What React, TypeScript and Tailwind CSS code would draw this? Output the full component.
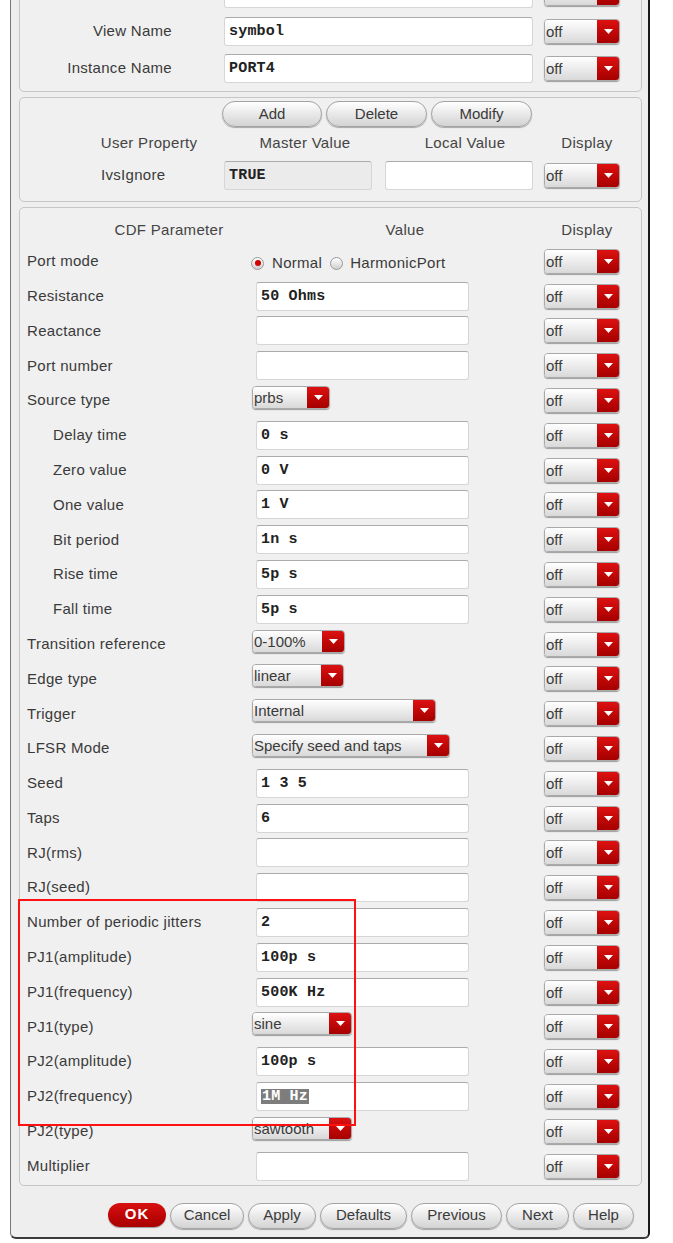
import React from "react";

type Row =
  | { label: string; indent?: boolean; kind: "field"; value: string; selected?: boolean }
  | { label: string; indent?: boolean; kind: "combo"; value: string; w: number }
  | { label: string; indent?: boolean; kind: "radio" };

const rows: Row[] = [
  { label: "Port mode", kind: "radio" },
  { label: "Resistance", kind: "field", value: "50 Ohms" },
  { label: "Reactance", kind: "field", value: "" },
  { label: "Port number", kind: "field", value: "" },
  { label: "Source type", kind: "combo", value: "prbs", w: 78 },
  { label: "Delay time", indent: true, kind: "field", value: "0 s" },
  { label: "Zero value", indent: true, kind: "field", value: "0 V" },
  { label: "One value", indent: true, kind: "field", value: "1 V" },
  { label: "Bit period", indent: true, kind: "field", value: "1n s" },
  { label: "Rise time", indent: true, kind: "field", value: "5p s" },
  { label: "Fall time", indent: true, kind: "field", value: "5p s" },
  { label: "Transition reference", kind: "combo", value: "0-100%", w: 93 },
  { label: "Edge type", kind: "combo", value: "linear", w: 92 },
  { label: "Trigger", kind: "combo", value: "Internal", w: 184 },
  { label: "LFSR Mode", kind: "combo", value: "Specify seed and taps", w: 198 },
  { label: "Seed", kind: "field", value: "1 3 5" },
  { label: "Taps", kind: "field", value: "6" },
  { label: "RJ(rms)", kind: "field", value: "" },
  { label: "RJ(seed)", kind: "field", value: "" },
  { label: "Number of periodic jitters", kind: "field", value: "2" },
  { label: "PJ1(amplitude)", kind: "field", value: "100p s" },
  { label: "PJ1(frequency)", kind: "field", value: "500K Hz" },
  { label: "PJ1(type)", kind: "combo", value: "sine", w: 100 },
  { label: "PJ2(amplitude)", kind: "field", value: "100p s" },
  { label: "PJ2(frequency)", kind: "field", value: "1M Hz", selected: true },
  { label: "PJ2(type)", kind: "combo", value: "sawtooth", w: 100 },
  { label: "Multiplier", kind: "field", value: "" },
];

const sans = "font-['Liberation_Sans',Arial,sans-serif]";
const mono = "font-['Liberation_Mono','Courier_New',monospace]";

function Combo({ text, w, h = 25, className = "" }: { text: string; w: number; h?: number; className?: string }) {
  return (
    <div
      className={`flex shrink-0 overflow-hidden rounded-[4px] border border-[#a9a9a9] shadow-[0_1px_1px_rgba(0,0,0,0.35)] ${className}`}
      style={{ width: w, height: h }}
    >
      <div className={`flex flex-1 items-center bg-gradient-to-b from-white to-[#d9d9d9] pl-[1px] text-[15px] leading-none text-[#3a3a3a] ${sans}`}>
        {text}
      </div>
      <div className="flex w-[22px] items-center justify-center bg-gradient-to-b from-[#dd1111] to-[#a60000]">
        <svg width="9" height="5" viewBox="0 0 9 5">
          <polygon points="0,0 9,0 4.5,5" fill="#fff" />
        </svg>
      </div>
    </div>
  );
}

function Field({ value, w, gray, selected }: { value: string; w: number; gray?: boolean; selected?: boolean }) {
  return (
    <div
      className={`flex h-[29px] shrink-0 items-center rounded-[3px] border border-[#d6d6d6] border-t-[#ababab] pl-[4px] ${gray ? "bg-[#ebebeb]" : "bg-white"}`}
      style={{ width: w }}
    >
      <span
        className={`whitespace-pre text-[15px] font-bold leading-none tracking-[0.2px] ${mono} ${selected ? "bg-[#7d7d7d] px-[1px] text-white" : "text-[#222]"}`}
      >
        {value}
      </span>
    </div>
  );
}

function Button({ text, w }: { text: string; w: number }) {
  return (
    <div
      className={`flex h-[26px] shrink-0 items-center justify-center rounded-full border border-[#a3a3a3] bg-gradient-to-b from-white to-[#d3d3d3] text-[15px] text-[#3a3a3a] shadow-[0_1px_1px_rgba(0,0,0,0.3)] ${sans}`}
      style={{ width: w }}
    >
      {text}
    </div>
  );
}

function Radio({ on }: { on?: boolean }) {
  return (
    <div className="flex h-[13px] w-[13px] items-center justify-center rounded-full border border-[#9a9a9a] bg-gradient-to-b from-white to-[#d0d0d0]">
      {on && <div className="h-[6px] w-[6px] rounded-full bg-[#d00000]" />}
    </div>
  );
}

function CdfRow({ row }: { row: Row }) {
  return (
    <div className="flex h-[34.8px] items-center">
      <div className={`w-[236px] shrink-0 text-[15px] tracking-[0.3px] text-[#3a3a3a] ${sans} ${row.indent ? "pl-[33px]" : "pl-[7px]"}`}>
        {row.label}
      </div>
      <div className="flex w-[288px] shrink-0 items-center">
        {row.kind === "field" && <Field value={row.value} w={213} selected={row.selected} />}
        {row.kind === "combo" && <Combo text={row.value} w={row.w} h={23} className="-ml-[4px] mb-[6px]" />}
        {row.kind === "radio" && (
          <div className={`-ml-[5px] mt-[4px] flex items-center text-[15px] tracking-[0.3px] text-[#3a3a3a] ${sans}`}>
            <Radio on />
            <span className="ml-[8px]">Normal</span>
            <span className="ml-[8px]">
              <Radio />
            </span>
            <span className="ml-[7px]">HarmonicPort</span>
          </div>
        )}
      </div>
      <Combo text="off" w={76} />
    </div>
  );
}

export default function App() {
  return (
    <div className="relative h-[1243px] w-[673px] overflow-hidden bg-white">
      <div className="ml-[10px] w-[640px] rounded-b-[6px] border-b-2 border-l border-r-2 border-b-[#3a3a3a] border-l-[#777] border-r-[#1a1a1a] bg-[#eeeeee] pb-[3px]">
        {/* top panel, scrolled past its first rows */}
        <div className="-mt-[42px] ml-[8px] w-[623px] rounded-[5px] border border-[#c6c6c6] bg-[#f0f0f0] pb-[4px] pt-[15px]">
          <div className="flex h-[39px] items-center">
            <div className="w-[152px] shrink-0" />
            <div className="ml-[52px]">
              <Field value="port" w={309} />
            </div>
            <div className="ml-[11px]">
              <Combo text="" w={76} />
            </div>
          </div>
          {[
            ["View Name", "symbol"],
            ["Instance Name", "PORT4"],
          ].map(([label, value]) => (
            <div key={label} className="flex h-[37px] items-center">
              <div className={`w-[152px] shrink-0 text-right text-[15px] tracking-[0.3px] text-[#3a3a3a] ${sans}`}>{label}</div>
              <div className="ml-[52px]">
                <Field value={value} w={309} />
              </div>
              <div className="ml-[11px]">
                <Combo text="off" w={76} />
              </div>
            </div>
          ))}
        </div>

        {/* user property panel */}
        <div className="ml-[8px] mt-[5px] h-[105px] w-[623px] rounded-[5px] border border-[#c6c6c6] bg-[#f0f0f0] pt-[3px]">
          <div className="flex gap-[4px] pl-[202px]">
            <Button text="Add" w={100} />
            <Button text="Delete" w={101} />
            <Button text="Modify" w={101} />
          </div>
          <div className={`mt-[3px] flex h-[26px] items-center text-[15px] tracking-[0.3px] text-[#444] ${sans}`}>
            <div className="w-[58px] shrink-0" />
            <div className="w-[142px] shrink-0 text-center">User Property</div>
            <div className="w-[4px] shrink-0" />
            <div className="w-[162px] shrink-0 text-center">Master Value</div>
            <div className="w-[158px] shrink-0 text-center">Local Value</div>
            <div className="w-[86px] shrink-0 text-center">Display</div>
          </div>
          <div className="mt-[2px] flex h-[34px] items-center">
            <div className={`w-[204px] shrink-0 pl-[81px] text-[15px] tracking-[0.3px] text-[#3a3a3a] ${sans}`}>IvsIgnore</div>
            <Field value="TRUE" w={148} gray />
            <div className="ml-[13px]">
              <Field value="" w={148} />
            </div>
            <div className="ml-[11px]">
              <Combo text="off" w={76} />
            </div>
          </div>
        </div>

        {/* CDF parameter panel */}
        <div className="ml-[8px] mt-[5px] w-[623px] rounded-[5px] border border-[#c6c6c6] bg-[#f0f0f0] pb-[1px] pt-[8px]">
          <div className={`flex h-[28px] items-center text-[15px] tracking-[0.3px] text-[#444] ${sans}`}>
            <div className="w-[80px] shrink-0" />
            <div className="w-[138px] shrink-0 text-center">CDF Parameter</div>
            <div className="w-[82px] shrink-0" />
            <div className="w-[170px] shrink-0 text-center">Value</div>
            <div className="w-[54px] shrink-0" />
            <div className="w-[86px] shrink-0 text-center">Display</div>
          </div>
          {rows.map((r) => (
            <CdfRow key={r.label} row={r} />
          ))}
        </div>

        {/* dialog buttons */}
        <div className="mt-[17px] flex gap-[4px] pl-[97px]">
          <div className="flex h-[24px] w-[58px] items-center justify-center rounded-full bg-gradient-to-b from-[#d81010] to-[#a80000] font-['Liberation_Sans',Arial,sans-serif] text-[15px] font-bold tracking-[1px] text-white shadow-[0_1px_1px_rgba(0,0,0,0.35)]">
            OK
          </div>
          <Button text="Cancel" w={74} />
          <Button text="Apply" w={68} />
          <Button text="Defaults" w={87} />
          <Button text="Previous" w={91} />
          <Button text="Next" w={63} />
          <Button text="Help" w={61} />
        </div>
        <div className="h-[5px]" />
      </div>

      {/* annotation box */}
      <div className="absolute left-[18px] top-[899px] h-[227px] w-[338px] border-2 border-[#ff1111]" />
    </div>
  );
}
